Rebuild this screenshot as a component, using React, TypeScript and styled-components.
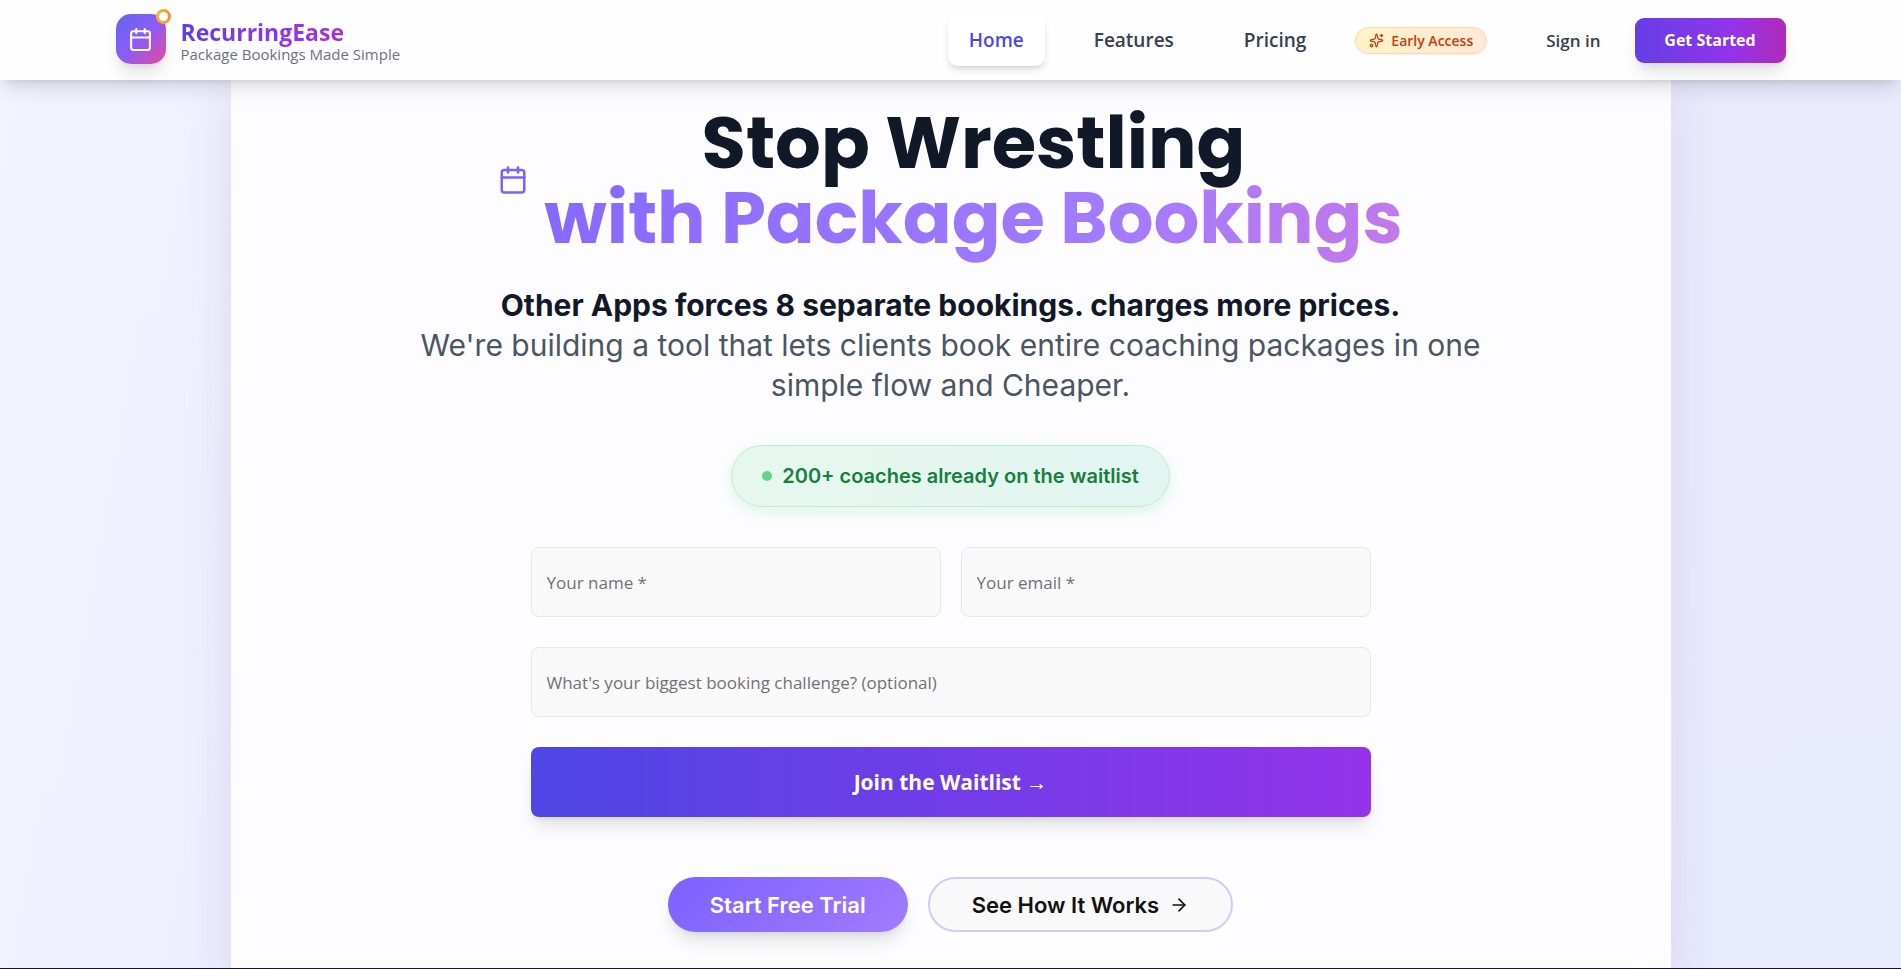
import React from "react";
import styled, { createGlobalStyle } from "styled-components";
import { ArrowRight, Calendar, Sparkles } from "lucide-react";

const uiFont = `"Segoe UI", "Open Sans", "Noto Sans", sans-serif`;
const bodyFont = `Inter, "Open Sans", sans-serif`;

const GlobalStyle = createGlobalStyle`
  *, *::before, *::after { box-sizing: border-box; }
  body { margin: 0; font-family: ${uiFont}; color: #111827; }
  a { color: inherit; text-decoration: none; }
  button, input { font-family: inherit; margin: 0; }
`;

const Page = styled.div`
  min-height: 100vh;
  display: flex;
  flex-direction: column;
  background:
    linear-gradient(100deg, rgba(245, 245, 255, 0.9) 0%, rgba(240, 240, 255, 0.5) 20%, rgba(233, 234, 254, 0) 60%),
    linear-gradient(180deg, #eaeafe 0%, #e8eafe 100%);
  border-bottom: 1px solid #16132b;
`;

const Header = styled.header`
  position: sticky;
  top: 0;
  z-index: 10;
  background: #fefefe;
  box-shadow: 0 12px 19px -4px rgba(0, 0, 0, 0.12), 0 5px 8px -5px rgba(0, 0, 0, 0.12);
`;

const HeaderInner = styled.div`
  max-width: 1702px;
  height: 80px;
  margin: 0 auto;
  padding: 0 16px;
  display: flex;
  align-items: center;
  justify-content: space-between;
`;

const Brand = styled.a`
  display: flex;
  align-items: center;
  gap: 15px;
`;

const LogoTile = styled.span`
  position: relative;
  width: 50px;
  height: 50px;
  margin-bottom: 2px;
  display: flex;
  align-items: center;
  justify-content: center;
  border-radius: 15px;
  color: #fff;
  background: linear-gradient(135deg, #6366f1 0%, #8b5cf6 50%, #ec4899 100%);
  box-shadow: 0 12px 18px -4px rgba(0, 0, 0, 0.12), 0 4px 7px -4px rgba(0, 0, 0, 0.1);
`;

const LogoDot = styled.span`
  position: absolute;
  top: -5px;
  right: -5px;
  width: 15px;
  height: 15px;
  display: flex;
  align-items: center;
  justify-content: center;
  border-radius: 50%;
  background: linear-gradient(90deg, #f2b92c, #ff8c37);

  &::after {
    content: "";
    width: 9px;
    height: 9px;
    border-radius: 50%;
    background: #fff;
  }
`;

const BrandText = styled.span`
  display: flex;
  flex-direction: column;
  margin-top: 2px;
`;

const BrandName = styled.span`
  align-self: flex-start;
  padding-bottom: 6px;
  margin-bottom: -6px;
  font-size: 23px;
  line-height: 26px;
  font-weight: 700;
  color: transparent;
  background: linear-gradient(90deg, #5f3fe8, #9333ea 70%, #a92fd2);
  background-clip: text;
  -webkit-background-clip: text;
`;

const Tagline = styled.span`
  font-size: 15px;
  line-height: 18px;
  font-weight: 500;
  color: #6b7280;
`;

const Nav = styled.nav`
  display: flex;
  align-items: center;
  gap: 28px;
`;

const NavLink = styled.a<{ $active?: boolean }>`
  height: 52px;
  padding: 0 21px;
  display: flex;
  align-items: center;
  border-radius: 10px;
  font-size: 19px;
  font-weight: 600;
  color: ${(p) => (p.$active ? "#4f46e5" : "#374151")};
  background: ${(p) => (p.$active ? "#fff" : "transparent")};
  box-shadow: ${(p) => (p.$active ? "0 5px 8px -1px rgba(0,0,0,0.1), 0 3px 5px -2px rgba(0,0,0,0.1)" : "none")};
`;

const EarlyAccess = styled.span`
  height: 27px;
  padding: 0 13px;
  display: flex;
  align-items: center;
  gap: 7px;
  border: 1px solid #fed7aa;
  border-radius: 14px;
  font-size: 14px;
  font-weight: 600;
  color: #c2410c;
  background: linear-gradient(90deg, #fef3c7, #ffe8d8);
  box-shadow: 0 1px 3px rgba(0, 0, 0, 0.06);
`;

const Actions = styled.div`
  display: flex;
  align-items: center;
  gap: 34px;
  padding-left: 31px;
`;

const SignIn = styled.a`
  font-size: 17px;
  font-weight: 600;
  color: #374151;
`;

const GetStarted = styled.button`
  width: 151px;
  height: 45px;
  padding: 0;
  border: 0;
  border-radius: 9px;
  font-size: 16px;
  font-weight: 700;
  color: #fff;
  background: linear-gradient(90deg, #653ee6, #9333ea 65%, #b02bba);
  box-shadow: 0 12px 18px -4px rgba(0, 0, 0, 0.12), 0 4px 7px -4px rgba(0, 0, 0, 0.1);
`;

const Card = styled.main`
  flex: 1;
  width: 100%;
  max-width: 1440px;
  margin: 0 auto;
  padding: 25px 32px 35px;
  display: flex;
  flex-direction: column;
  align-items: center;
  background: #fdfdff;
  box-shadow: 0 15px 45px rgba(60, 50, 110, 0.11);
`;

const Hero = styled.div`
  display: flex;
  align-items: center;
  gap: 16px;
  color: #7b61ff;
`;

const Title = styled.h1`
  margin: 0;
  font-family: Poppins, ${bodyFont};
  font-size: 72px;
  line-height: 75px;
  font-weight: 700;
  text-align: center;
  color: #111827;
`;

const TitleAccent = styled.span`
  display: block;
  padding-bottom: 15px;
  margin-bottom: -15px;
  color: transparent;
  background: linear-gradient(100deg, #8768ff 0%, #a27bff 65%, #c478e8 100%);
  background-clip: text;
  -webkit-background-clip: text;
`;

const Lead = styled.p`
  max-width: 1120px;
  margin: 30px 0 40px;
  font-family: ${bodyFont};
  font-size: 30px;
  line-height: 40px;
  text-align: center;
  color: #4b5563;

  strong {
    display: block;
    font-weight: 700;
    color: #111827;
  }
`;

const WaitlistCount = styled.div`
  height: 62px;
  padding: 0 30px;
  display: flex;
  align-items: center;
  gap: 10px;
  border: 1px solid #bbedd0;
  border-radius: 31px;
  font-family: ${bodyFont};
  font-size: 20px;
  font-weight: 600;
  color: #15803d;
  background: linear-gradient(90deg, #e6f7ee, #e3f5f1);
  box-shadow: 0 5px 15px rgba(34, 197, 94, 0.15);

  &::before {
    content: "";
    width: 10px;
    height: 10px;
    border-radius: 50%;
    background: #62d48c;
  }
`;

const Form = styled.form`
  width: 100%;
  max-width: 840px;
  margin: 40px 0 60px;
  display: grid;
  grid-template-columns: 1fr 1fr;
  gap: 30px 20px;
`;

const Field = styled.input<{ $wide?: boolean }>`
  grid-column: ${(p) => (p.$wide ? "1 / -1" : "auto")};
  width: 100%;
  height: 70px;
  padding: 0 15px;
  border: 1px solid #e5e7eb;
  border-radius: 8px;
  font-size: 17px;
  color: #111827;
  background: #f9f9f9;

  &::placeholder { color: #71717a; opacity: 1; }
`;

const Join = styled.button`
  grid-column: 1 / -1;
  height: 70px;
  border: 0;
  border-radius: 8px;
  font-size: 21px;
  font-weight: 700;
  color: #fff;
  background: linear-gradient(90deg, #4f46e5, #9333ea);
  box-shadow: 0 12px 18px -4px rgba(0, 0, 0, 0.12), 0 4px 7px -4px rgba(0, 0, 0, 0.1);
`;

const CtaRow = styled.div`
  display: flex;
  gap: 20px;
`;

const Cta = styled.button<{ $outline?: boolean }>`
  height: 55px;
  padding: 0 42px;
  display: flex;
  align-items: center;
  gap: 10px;
  border: ${(p) => (p.$outline ? "2px solid #d3cafb" : "0")};
  border-radius: 28px;
  font-family: ${bodyFont};
  font-size: 22px;
  font-weight: 600;
  color: ${(p) => (p.$outline ? "#111113" : "#fff")};
  background: ${(p) => (p.$outline ? "#f9f9f9" : "linear-gradient(135deg, #7b61ff, #a27bff)")};
  box-shadow: ${(p) =>
    p.$outline ? "none" : "0 12px 18px -4px rgba(0,0,0,0.12), 0 4px 7px -4px rgba(0,0,0,0.1)"};
`;

export default function App() {
  return (
    <>
      <GlobalStyle />
      <Page>
        <Header>
          <HeaderInner>
            <Brand href="#home">
              <LogoTile>
                <Calendar size={25} />
                <LogoDot />
              </LogoTile>
              <BrandText>
                <BrandName>RecurringEase</BrandName>
                <Tagline>Package Bookings Made Simple</Tagline>
              </BrandText>
            </Brand>
            <Nav>
              <NavLink href="#home" $active aria-current="page">Home</NavLink>
              <NavLink href="#features">Features</NavLink>
              <NavLink href="#pricing">Pricing</NavLink>
              <EarlyAccess>
                <Sparkles size={15} />
                Early Access
              </EarlyAccess>
              <Actions>
                <SignIn href="#signin">Sign in</SignIn>
                <GetStarted type="button">Get Started</GetStarted>
              </Actions>
            </Nav>
          </HeaderInner>
        </Header>
        <Card>
          <Hero>
            <Calendar size={30} />
            <Title>
              Stop Wrestling
              <TitleAccent>with Package Bookings</TitleAccent>
            </Title>
          </Hero>
          <Lead>
            <strong>Other Apps forces 8 separate bookings. charges more prices.</strong>
            We're building a tool that lets clients book entire coaching packages in one simple flow and Cheaper.
          </Lead>
          <WaitlistCount>200+ coaches already on the waitlist</WaitlistCount>
          <Form onSubmit={(e) => e.preventDefault()}>
            <Field type="text" name="name" aria-label="Your name" placeholder="Your name *" required />
            <Field type="email" name="email" aria-label="Your email" placeholder="Your email *" required />
            <Field
              $wide
              type="text"
              name="challenge"
              aria-label="What's your biggest booking challenge?"
              placeholder="What's your biggest booking challenge? (optional)"
            />
            <Join type="submit">Join the Waitlist →</Join>
          </Form>
          <CtaRow>
            <Cta type="button">Start Free Trial</Cta>
            <Cta type="button" $outline>
              See How It Works
              <ArrowRight size={20} />
            </Cta>
          </CtaRow>
        </Card>
      </Page>
    </>
  );
}
